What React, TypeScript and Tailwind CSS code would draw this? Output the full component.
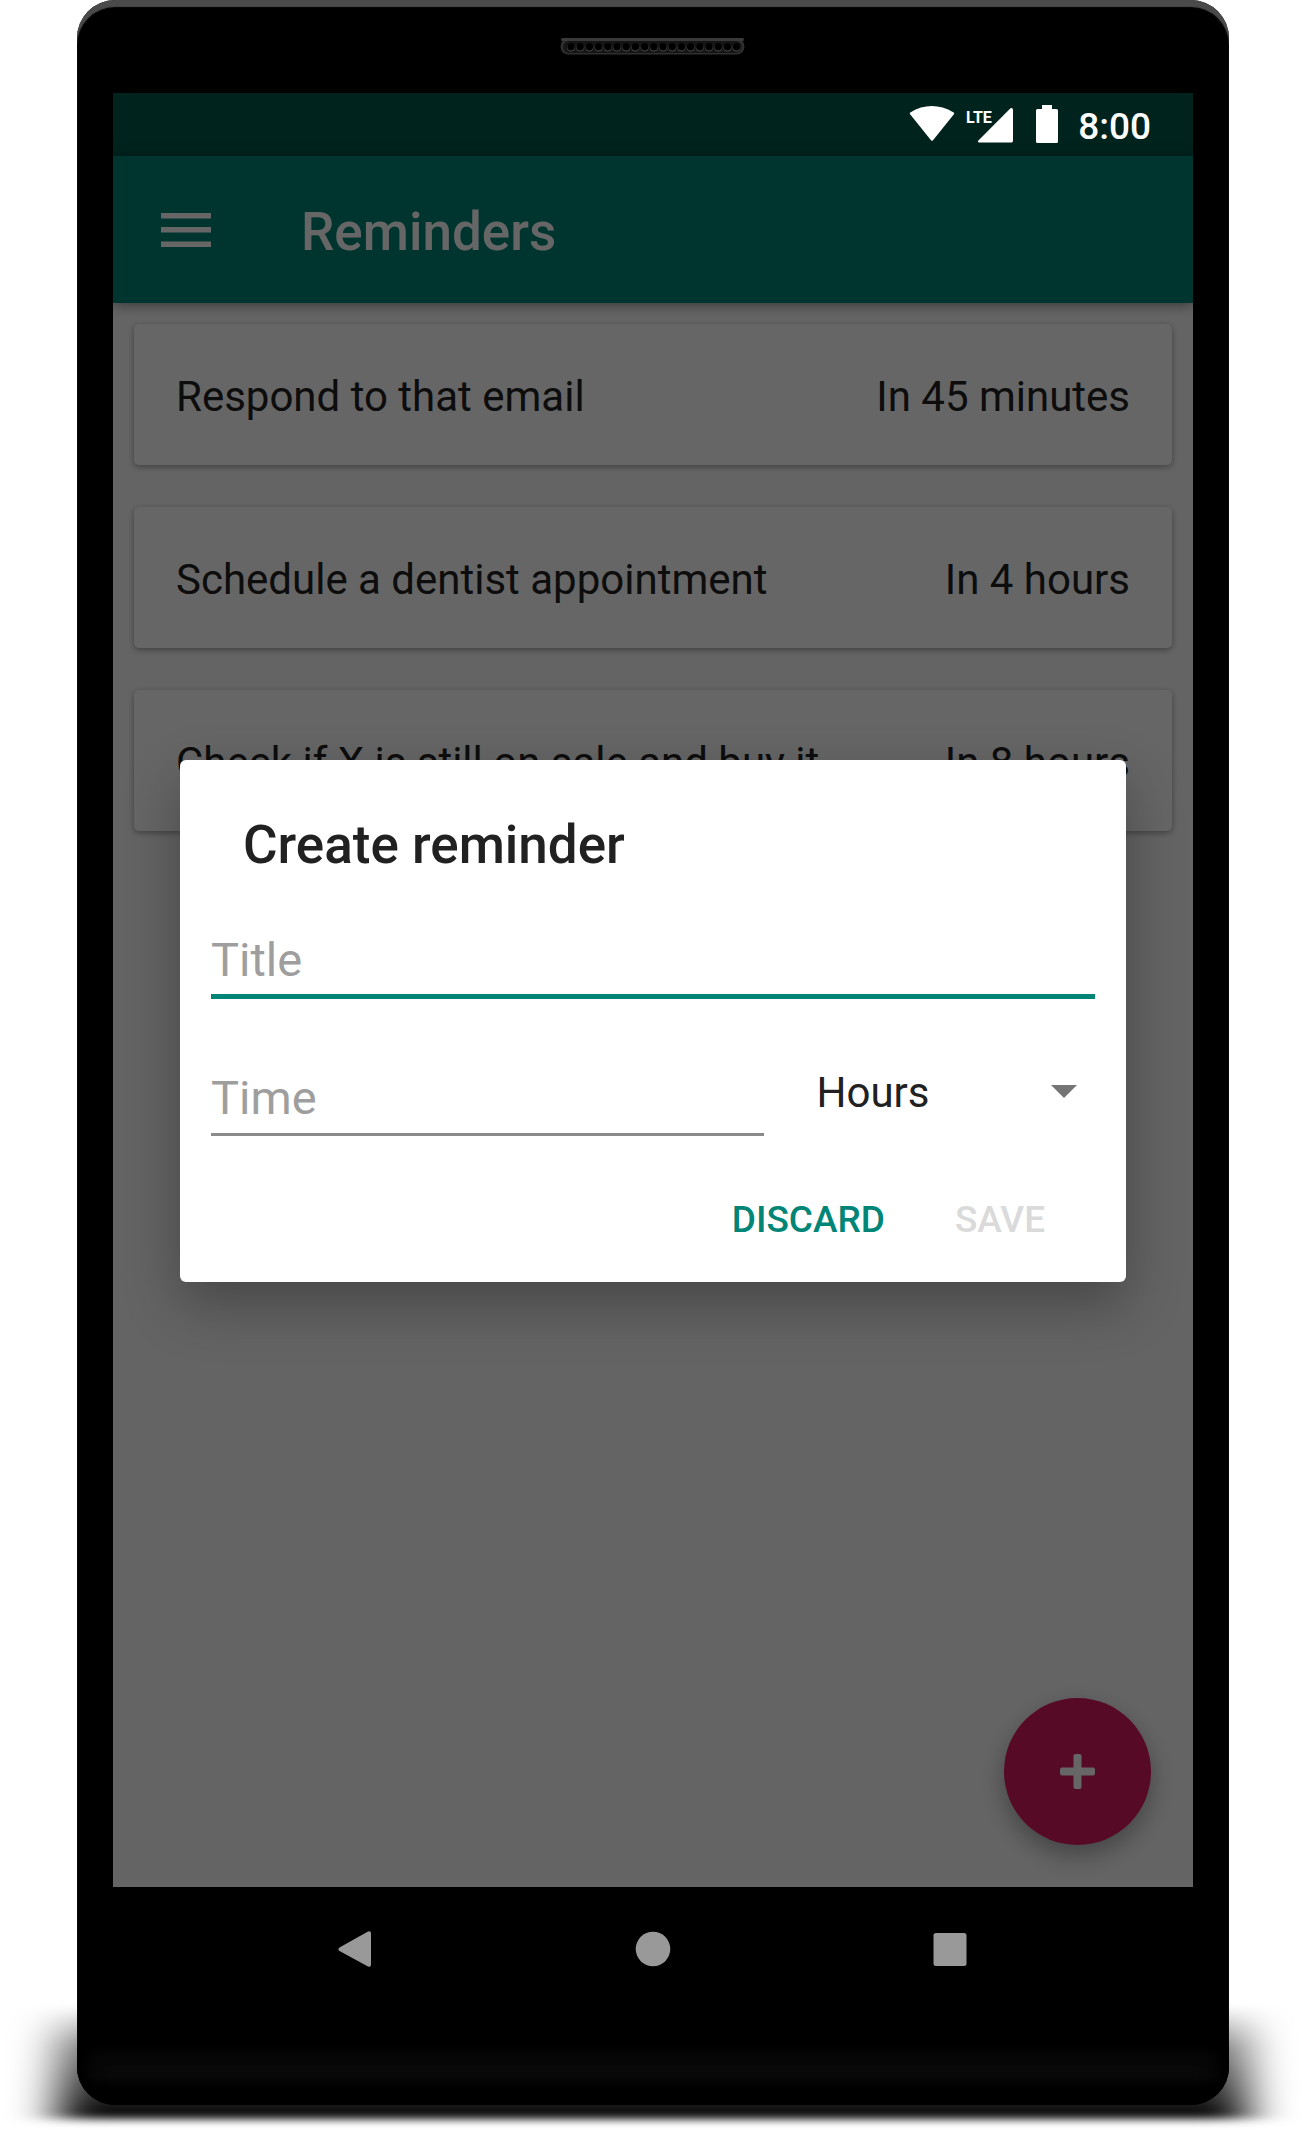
import { useState } from "react";

const REMINDERS = [
  { title: "Respond to that email", due: "In 45 minutes" },
  { title: "Schedule a dentist appointment", due: "In 4 hours" },
  { title: "Check if X is still on sale and buy it", due: "In 8 hours" },
];

const SPEAKER_HOLES = Array.from({ length: 19 }, (_, i) => 11 + i * 9.2);

function Speaker() {
  return (
    <svg width="186" height="18" viewBox="0 0 186 18" aria-hidden="true">
      <rect x="0.5" y="0.5" width="184" height="16" rx="8" fill="#2f2f2f" />
      <rect x="1" y="0" width="183" height="3" rx="1.5" fill="#3a3a3a" />
      <rect x="3" y="3" width="179" height="12" rx="6" fill="#151515" />
      {SPEAKER_HOLES.map((x) => (
        <g key={x}>
          <circle cx={x} cy="9.6" r="4" fill="#474747" />
          <circle cx={x} cy="8.8" r="3.7" fill="#000" />
        </g>
      ))}
    </svg>
  );
}

function GroundShadow() {
  return (
    <svg
      className="absolute inset-x-0 bottom-0 h-[150px] w-full"
      viewBox="0 0 1305 150"
      preserveAspectRatio="none"
      aria-hidden="true"
    >
      <defs>
        <linearGradient id="ground" x1="0" y1="0" x2="0" y2="1">
          <stop offset="0" stopColor="#000" stopOpacity="0" />
          <stop offset="0.35" stopColor="#000" stopOpacity="0.5" />
          <stop offset="1" stopColor="#000" stopOpacity="1" />
        </linearGradient>
        <filter id="soft" filterUnits="userSpaceOnUse" x="0" y="0" width="1305" height="150">
          <feGaussianBlur stdDeviation="23 4" />
        </filter>
      </defs>
      <rect x="58" y="26" width="1189" height="113" fill="url(#ground)" filter="url(#soft)" />
    </svg>
  );
}

function StatusBar() {
  return (
    <div className="flex h-[63px] items-center justify-end bg-[#00574b] pt-[2px] pr-[42px]">
      <div className="relative z-20 flex items-center text-white">
        <svg width="106" height="42" viewBox="0 0 106 42" aria-label="LTE signal" role="img" fill="currentColor">
          <path d="M1.3 9.5Q0.2 8.5 1.3 7.4Q22.5 -5.4 44.7 7.4Q45.8 8.5 44.7 9.5L24 35.2Q23 36.3 22 35.2Z" />
          <text x="57" y="18" fontFamily="Roboto" fontSize="16" fontWeight="700">
            LTE
          </text>
          <path d="M104 5.2V36Q104 37.4 102.6 37.4H70.5Q68 37.2 69.4 35.4L101.500 3.200Q103.800 2.200 104 5.200Z" />
        </svg>
        <svg className="ml-[20px]" width="24" height="42" viewBox="0 0 24 42" aria-label="Battery full" role="img">
          <path d="M7 0H17V4H21.500Q23 4 23 5.500V36.500Q23 38 21.500 38H2.500Q1 38 1 36.500V5.500Q1 4 2.500 4H7Z" fill="currentColor" />
        </svg>
        <span className="ml-[19px] pt-[2px] text-[37px] leading-[42px] font-medium">8:00</span>
      </div>
    </div>
  );
}

function AppBar() {
  return (
    <header className="relative flex h-[147px] items-center bg-[#008577] pl-[42px] text-white shadow-[0_2px_12px_rgba(0,0,0,0.45)]">
      <button type="button" aria-label="Open menu" className="p-[6px]">
        <svg width="50" height="34" viewBox="0 0 50 34" fill="currentColor" aria-hidden="true">
          <path d="M0 0H50V5.500H0ZM0 14H50V19.500H0ZM0 28.500H50V34H0Z" />
        </svg>
      </button>
      <h1 className="ml-[84px] pt-[4px] text-[53px] leading-[60px] font-medium">Reminders</h1>
    </header>
  );
}

function ReminderCard({ title, due }: { title: string; due: string }) {
  return (
    <li className="flex justify-between rounded-[5px] bg-white px-[42px] pt-[44px] pb-[40px] text-[42px] leading-[57px] text-[#212121] shadow-[0_2px_6px_rgba(0,0,0,0.35)]">
      <span>{title}</span>
      <span>{due}</span>
    </li>
  );
}

function CreateReminderDialog() {
  const [title, setTitle] = useState("");
  const [time, setTime] = useState("");
  const [unit, setUnit] = useState("Hours");

  return (
    <form
      role="dialog"
      aria-labelledby="dialog-title"
      className="w-full rounded-[6px] bg-white px-[31px] pt-[55px] pb-[15px] shadow-[0_22px_56px_rgba(0,0,0,0.3)]"
      onSubmit={(e) => e.preventDefault()}
    >
      <h2 id="dialog-title" className="pl-[32px] text-[53px] leading-[60px] font-medium text-[#212121]">
        Create reminder
      </h2>
      <input
        aria-label="Title"
        placeholder="Title"
        value={title}
        onChange={(e) => setTitle(e.target.value)}
        className="mt-[58px] block h-[66px] w-full border-b-5 border-[#008577] pb-[9px] text-[47px] leading-[52px] text-[#212121] outline-none placeholder:text-[#9e9e9e]"
      />
      <div className="mt-[72px] grid grid-cols-[5fr_3fr] items-start">
        <input
          aria-label="Time"
          placeholder="Time"
          inputMode="numeric"
          value={time}
          onChange={(e) => setTime(e.target.value)}
          className="block h-[65px] w-full min-w-0 border-b-3 border-[#8a8a8a] pb-[10px] text-[47px] leading-[52px] text-[#212121] outline-none placeholder:text-[#9e9e9e]"
        />
        <div className="relative">
          <select
            aria-label="Unit"
            value={unit}
            onChange={(e) => setUnit(e.target.value)}
            className="block h-[44px] w-full appearance-none bg-transparent pl-[53px] text-[42px] leading-[44px] text-[#212121] outline-none"
          >
            <option>Minutes</option>
            <option>Hours</option>
            <option>Days</option>
          </select>
          <svg
            className="pointer-events-none absolute top-[14px] right-[18px]"
            width="26"
            height="13"
            viewBox="0 0 26 13"
            aria-hidden="true"
          >
            <path d="M0 0H26L13 13Z" fill="#757575" />
          </svg>
        </div>
      </div>
      <div className="mt-[37px] flex justify-end gap-[10px] pr-[11px] text-[37px] leading-[44px] font-medium">
        <button type="button" className="h-[94px] px-[21px] text-[#008577]">
          DISCARD
        </button>
        <button type="submit" disabled className="h-[94px] w-[168px] text-[#dadada]">
          SAVE
        </button>
      </div>
    </form>
  );
}

function NavBar() {
  return (
    <nav className="flex h-[160px] items-start justify-evenly pt-[44px] text-[#999]">
      <button type="button" aria-label="Back">
        <svg width="36" height="36" viewBox="0 0 36 36" fill="currentColor" aria-hidden="true">
          <path d="M1.500 16.400L30 0.500Q33 -0.400 33 2.500V33.500Q33 36.500 30 35.500L1.500 20Q-0.500 18.200 1.500 16.400Z" />
        </svg>
      </button>
      <button type="button" aria-label="Home">
        <svg width="36" height="36" viewBox="0 0 36 36" fill="currentColor" aria-hidden="true">
          <circle cx="18" cy="18" r="17.300" />
        </svg>
      </button>
      <button type="button" aria-label="Recent apps">
        <svg width="36" height="36" viewBox="0 0 36 36" fill="currentColor" aria-hidden="true">
          <rect x="1.500" y="2" width="33" height="33" rx="2.500" />
        </svg>
      </button>
    </nav>
  );
}

export default function App() {
  return (
    <div className="relative bg-white pr-[76px] pb-[25px] pl-[77px] font-['Roboto',sans-serif]">
      <GroundShadow />
      <div className="relative overflow-hidden rounded-[38px] bg-black shadow-[inset_0_7px_1px_#4a4a4a]">
        <div className="flex h-[93px] justify-center pt-[38px]">
          <Speaker />
        </div>

        <div className="relative mx-[36px] flex min-h-[1794px] flex-col overflow-hidden bg-[#fafafa]">
          <StatusBar />
          <AppBar />
          <main className="flex flex-1 flex-col justify-between">
            <ul className="flex flex-col gap-[42px] p-[21px]">
              {REMINDERS.map((r) => (
                <ReminderCard key={r.title} title={r.title} due={r.due} />
              ))}
            </ul>
            <button
              type="button"
              aria-label="Add reminder"
              className="m-[42px] flex size-[147px] items-center justify-center self-end rounded-full bg-[#d81b60] text-white shadow-[0_10px_24px_rgba(0,0,0,0.32)]"
            >
              <svg width="35" height="35" viewBox="0 0 35 35" fill="currentColor" aria-hidden="true">
                <rect x="13.500" y="0" width="8" height="35" rx="2" />
                <rect x="0" y="13.500" width="35" height="8" rx="2" />
              </svg>
            </button>
          </main>
          <div className="absolute inset-0 z-10 flex items-center bg-black/60 px-[67px] pt-[62px]">
            <CreateReminderDialog />
          </div>
        </div>

        <NavBar />
        <div className="h-[58px] bg-linear-to-b from-[#080808] from-50% to-black shadow-[inset_12px_0_16px_#000,inset_-12px_0_16px_#000]" />
      </div>
    </div>
  );
}
